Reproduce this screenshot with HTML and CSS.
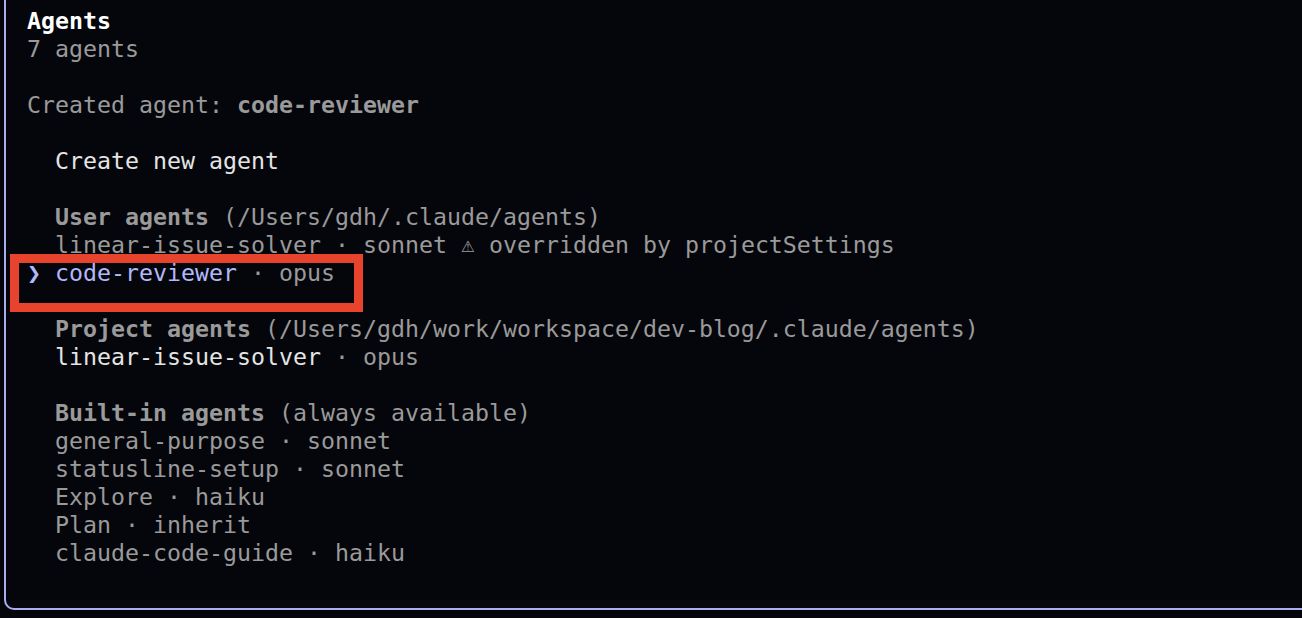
FILE: index.html
```html
<!DOCTYPE html>
<html lang="en">
<head>
<meta charset="utf-8">
<title>Agents</title>
<link rel="stylesheet" href="styles.css">
</head>
<body>
<div class="frame">
  <div class="block">
    <div class="line title">Agents</div>
    <div class="line dim">7 agents</div>
  </div>
  <div class="block">
    <div class="line dim">Created agent: <b>code-reviewer</b></div>
  </div>
  <div class="block list">
    <div class="line item bright">Create new agent</div>
  </div>
  <div class="block list">
    <div class="line item dim"><b>User agents</b> (/Users/gdh/.claude/agents)</div>
    <div class="line item dim">linear-issue-solver · sonnet <span class="warn">⚠</span> overridden by projectSettings</div>
    <div class="line selected"><span class="marker">❯</span><span class="accent">code-reviewer</span><span class="dim"> · opus</span></div>
  </div>
  <div class="block list">
    <div class="line item dim"><b>Project agents</b> (/Users/gdh/work/workspace/dev-blog/.claude/agents)</div>
    <div class="line item"><span class="bright">linear-issue-solver</span><span class="dim"> · opus</span></div>
  </div>
  <div class="block list">
    <div class="line item dim"><b>Built-in agents</b> (always available)</div>
    <div class="line item dim">general-purpose · sonnet</div>
    <div class="line item dim">statusline-setup · sonnet</div>
    <div class="line item dim">Explore · haiku</div>
    <div class="line item dim">Plan · inherit</div>
    <div class="line item dim">claude-code-guide · haiku</div>
  </div>
</div>
<div class="highlight"></div>
</body>
</html>
```

FILE: styles.css
```css
html, body {
  margin: 0;
  padding: 0;
  background: #05060b;
  overflow: hidden;
  height: 100%;
}

body {
  position: relative;
  font-family: "DejaVu Sans Mono", "Liberation Mono", monospace;
  font-size: 23.25px;
  line-height: 28px;
  color: #9a9a9a;
}

.frame {
  margin-left: 4px;
  margin-right: -40px;
  padding: 7px 0 41px 21px;
  border-left: 2px solid #a9aeef;
  border-bottom: 2px solid #a9aeef;
  border-bottom-left-radius: 10px;
  display: flex;
  flex-direction: column;
  gap: 28px;
}

.block {
  display: flex;
  flex-direction: column;
}

.line {
  height: 28px;
  white-space: pre;
}

.title {
  color: #ffffff;
  font-weight: bold;
}

.dim {
  color: #9a9a9a;
}

.bright {
  color: #e4e4e4;
}

.item {
  padding-left: 2ch;
}

.selected {
  display: flex;
}

.marker {
  width: 2ch;
  color: #b1b9f9;
}

.accent {
  color: #b1b9f9;
}

.warn {
  display: inline-block;
  width: 14px;
  text-align: center;
  font-size: 22px;
  line-height: 28px;
  vertical-align: top;
}

.highlight {
  position: absolute;
  left: 10px;
  top: 254px;
  width: 335px;
  height: 40px;
  border: 9px solid #e8432d;
}
```
